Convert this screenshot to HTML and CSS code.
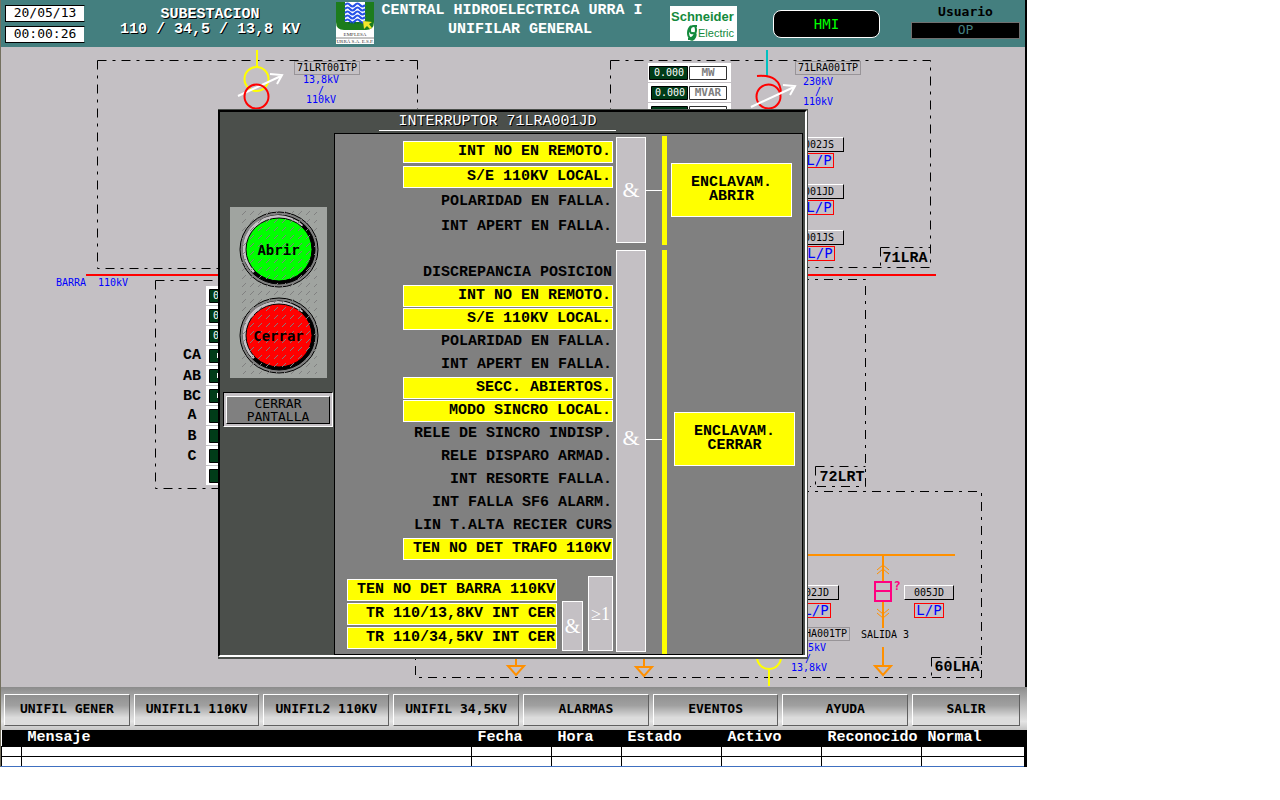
FILE: index.html
```html
<!DOCTYPE html>
<html lang="es">
<head>
<meta charset="utf-8">
<title>Subestacion 110 / 34,5 / 13,8 KV</title>
<link rel="stylesheet" href="styles.css">
</head>
<body>
<div class="app">
  <header class="topbar">
    <div class="clock"><time>20/05/13</time><time>00:00:26</time></div>
    <h1 class="station">SUBESTACION<br>110 / 34,5 / 13,8 KV</h1>
    <svg class="urra" width="38" height="42" viewBox="0 0 38 42" role="img" aria-label="Empresa Urra">
      <rect width="38" height="42" fill="#fff"/>
      <path d="M0 0H38V20Q38 28 30 28H8Q0 28 0 20Z" fill="#1c7c1c"/>
      <rect x="9" y="0" width="20" height="20" fill="#fff"/>
      <g fill="none" stroke="#2450e8" stroke-width="2">
        <path d="M9 3q2.500-3 5 0t5 0t5 0t5 0M9 7q2.500-3 5 0t5 0t5 0t5 0M9 11q2.500-3 5 0t5 0t5 0t5 0M9 15q2.500-3 5 0t5 0t5 0t5 0M9 19q2.500-3 5 0t5 0t5 0t5 0"/>
      </g>
      <path d="M12 21h16" stroke="#063" stroke-dasharray="2 1"/>
      <path d="M27 19l9 1-3 2 3 4-2 1-3-3-3 3z" fill="#f2e62a"/>
      <text x="19" y="34" text-anchor="middle" class="urra-name">EMPLESA</text>
      <path d="M0 36h38" stroke="#888"/>
      <text x="19" y="41" text-anchor="middle" class="urra-name">URRÁ S.A. E.S.P.</text>
    </svg>
    <h2 class="title">CENTRAL HIDROELECTRICA URRA I<br><span>UNIFILAR GENERAL</span></h2>
    <svg class="schneider" width="67" height="35" viewBox="0 0 67 35" role="img" aria-label="Schneider Electric">
      <rect width="67" height="35" fill="#fff"/>
      <text x="1" y="15" class="sch-name">Schneider</text>
      <g fill="none" stroke="#138a3c" stroke-width="2">
        <path d="M27 20h-3q-4 0-4 4t3 3q4 0 2 4t-5 2h-2M21 20q-3 3-3 7t3 6M25 20q2 4 0 8t-5 5"/>
      </g>
      <text x="28" y="31" class="sch-sub">Electric</text>
    </svg>
    <button class="hmi" type="button">HMI</button>
    <div class="user"><span>Usuario</span><output>OP</output></div>
  </header>

  <main class="diagram">
    <svg class="lines" width="1027" height="640" viewBox="0 47 1027 640" aria-label="Diagrama unifilar">
      <g class="zone">
        <path d="M97.500 60.500H417.500M97.500 60.500V268.500H417.500M417.500 60.500V268.500"/>
        <path d="M610.500 60.500H930.500V267.500H610.500M610.500 60.500V267.500M880.500 247.500H930.500M880.500 247.500V267.500"/>
        <path d="M155.500 280.500H220M155.500 280.500V488.500H220M800 279.500H865.500V486.500H810M815.500 466.500H865.500M815.500 466.500V486.500"/>
        <path d="M800 491.500H981.500V677.500H415.500V655M931.500 657.500H981.500M931.500 657.500V677.500"/>
      </g>
      <path d="M86 275H936" stroke="#f00" stroke-width="2"/>
      <g fill="none" stroke-width="2">
        <path d="M257 50V67" stroke="#ff0"/>
        <circle cx="256.500" cy="79" r="12" stroke="#ff0"/>
        <path d="M238 96L281 76M270 74L282 75L277 84" stroke="#fff"/>
        <circle cx="256.500" cy="96.500" r="12" stroke="#f00"/>
        <path d="M767 50V76" stroke="#00c0c0"/>
        <path d="M757 76Q781 74 781 94" stroke="#f00"/>
        <circle cx="768.500" cy="96.500" r="12" stroke="#f00"/>
        <path d="M751 107L794 87M783 85L795 86L790 95" stroke="#fff"/>
        <path d="M757 657a12 12 0 0 0 24 0M769 669V686" stroke="#ff0"/>
        <g stroke="#ff9000">
          <path d="M800 555H955M883 555V581M883 602V628M883 647V666M875 666H891L883 675Z"/>
          <path d="M516 655V666M508 666H524L516 675Z"/>
          <path d="M644 655V667M636 667H652L644 676Z"/>
          <path stroke-width="1" d="M877 570l6-5 6 5M877 574l6-5 6 5M877 609l6 5 6-5M877 613l6 5 6-5"/>
        </g>
        <path d="M875 582H891V601H875ZM875 591H891" stroke="#ff0080"/>
      </g>
      <g class="meters">
        <path d="M648 63h83v19h-83zM648 83h83v19h-83zM648 103h83v10h-83z" fill="#fff"/>
        <path d="M206 286h14v199h-14z" fill="#fff"/>
        <path d="M206 305.500h14m-14 20h14m-14 20h14m-14 20h14m-14 20h14m-14 20h14m-14 20h14m-14 20h14m-14 20h14" stroke="#c4c0c4"/>
        <path class="lcd" d="M649.500 66.500h38v13h-38zM651.500 86.500h36v13h-36zM651.500 106.500h36v13h-36z"/>
        <path class="unit" d="M689.500 66.500h37v13h-37zM689.500 86.500h37v13h-37zM689.500 106.500h37v13h-37z"/>
        <path class="lcd" d="M209.500 289.500h20v13h-20zM209.500 309.500h20v13h-20zM209.500 329.500h20v13h-20zM209.500 349.500h20v13h-20zM209.500 369.500h20v13h-20zM209.500 389.500h20v13h-20zM209.500 409.500h20v13h-20zM209.500 429.500h20v13h-20zM209.500 449.500h20v13h-20zM209.500 469.500h20v13h-20z"/>
        <path d="M217.500 353v5m0 15v5m0 15v5" stroke="#fff"/>
      </g>
      <g class="lcd-text">
        <text x="654" y="76">0.000</text><text x="655" y="96">0.000</text>
        <text x="213" y="299">0</text><text x="213" y="319">0</text><text x="213" y="339">0</text>
      </g>
      <g class="unit-text"><text x="708" y="76">MW</text><text x="708" y="96">MVAR</text></g>
      <g class="blue">
        <text x="321" y="83">13,8kV</text><text x="321" y="94">/</text><text x="321" y="103">110kV</text>
        <text x="818" y="85">230kV</text><text x="818" y="95">/</text><text x="818" y="105">110kV</text>
        <text x="71" y="286">BARRA</text><text x="113" y="286">110kV</text>
        <text x="808" y="651">34,5kV</text><text x="808" y="662">/</text><text x="809" y="671">13,8kV</text>
      </g>
      <g class="phase">
        <text x="192" y="359">CA</text><text x="192" y="380">AB</text><text x="192" y="400">BC</text>
        <text x="192" y="419">A</text><text x="192" y="440">B</text><text x="192" y="460">C</text>
        <text x="905" y="262">71LRA</text><text x="842" y="481">72LRT</text><text x="957" y="671">60LHA</text>
      </g>
      <text x="885" y="638" class="feeder">SALIDA 3</text>
      <text x="897" y="590" class="unknown">?</text>
    </svg>
    <span class="tag trafo-lrt">71LRT001TP</span>
    <span class="tag trafo-lra">71LRA001TP</span>
    <span class="tag trafo-lha">71LHA001TP</span>
    <button type="button" class="dev d1">002JS</button><button type="button" class="lp p1">L/P</button>
    <button type="button" class="dev d2">001JD</button><button type="button" class="lp p2">L/P</button>
    <button type="button" class="dev d3">001JS</button><button type="button" class="lp p3">L/P</button>
    <button type="button" class="dev d4">002JD</button><button type="button" class="lp p4">L/P</button>
    <button type="button" class="dev d5">005JD</button><button type="button" class="lp p5">L/P</button>

    <section class="dialog" role="dialog" aria-labelledby="dlg-title">
      <div class="frame">
        <h3 class="dialog-title" id="dlg-title">INTERRUPTOR 71LRA001JD</h3>
        <div class="dialog-body">
          <div class="side">
            <div class="plate">
              <button type="button" class="round open">
                <svg width="80" height="77" viewBox="0 0 80 77" aria-hidden="true">
                  <ellipse cx="40" cy="38.500" rx="39" ry="37.500" fill="#808080" stroke="#000"/>
                  <ellipse cx="40" cy="38.500" rx="36" ry="34.500" fill="#000" stroke="#000"/>
                  <path d="M14 62A35 33.500 0 0 1 64 14L60 20L18 58Z" fill="#c4c0c4"/>
                  <ellipse cx="40" cy="38.500" rx="33" ry="31.500" fill="#0f0" stroke="#000"/>
                </svg><span>Abrir</span></button>
              <button type="button" class="round close">
                <svg width="80" height="77" viewBox="0 0 80 77" aria-hidden="true">
                  <ellipse cx="40" cy="38.500" rx="39" ry="37.500" fill="#808080" stroke="#000"/>
                  <ellipse cx="40" cy="38.500" rx="36" ry="34.500" fill="#000" stroke="#000"/>
                  <path d="M14 62A35 33.500 0 0 1 64 14L60 20L18 58Z" fill="#c4c0c4"/>
                  <ellipse cx="40" cy="38.500" rx="33" ry="31.500" fill="#f00" stroke="#000"/>
                </svg><span>Cerrar</span></button>
              <svg class="hatch" width="97" height="171" aria-hidden="true">
                <defs><pattern id="dash" x="11" y="3" width="8" height="8" patternUnits="userSpaceOnUse"><path d="M1 4h1v-1h1v-1h1v-1h1v1h-1v1h-1v1h-1v1h-1z" fill="#808080"/></pattern></defs>
                <rect x="11" y="3" width="76" height="164" fill="url(#dash)"/>
              </svg>
            </div>
            <button type="button" class="exit"><span>CERRAR<br>PANTALLA</span></button>
          </div>
          <div class="logic">
            <div class="group trip">
              <ul class="conds">
                <li class="on">INT NO EN REMOTO.</li>
                <li class="on">S/E 110KV LOCAL.</li>
                <li>POLARIDAD EN FALLA.</li>
                <li>INT APERT EN FALLA.</li>
              </ul>
              <div class="gate">&amp;</div>
              <div class="wire"><hr></div>
              <div class="bus"></div>
              <div class="out"><p>ENCLAVAM.<br>ABRIR</p></div>
            </div>
            <div class="group shut">
              <div class="inputs">
                <ul class="conds">
                  <li>DISCREPANCIA POSICION</li>
                  <li class="on">INT NO EN REMOTO.</li>
                  <li class="on">S/E 110KV LOCAL.</li>
                  <li>POLARIDAD EN FALLA.</li>
                  <li>INT APERT EN FALLA.</li>
                  <li class="on">SECC. ABIERTOS.</li>
                  <li class="on">MODO SINCRO LOCAL.</li>
                  <li>RELE DE SINCRO INDISP.</li>
                  <li>RELE DISPARO ARMAD.</li>
                  <li>INT RESORTE FALLA.</li>
                  <li>INT FALLA SF6 ALARM.</li>
                  <li>LIN T.ALTA RECIER CURS</li>
                  <li class="on">TEN NO DET TRAFO 110KV</li>
                </ul>
                <div class="sub">
                  <ul class="conds">
                    <li class="on">TEN NO DET BARRA 110KV</li>
                    <li class="on">TR 110/13,8KV INT CER</li>
                    <li class="on">TR 110/34,5KV INT CER</li>
                  </ul>
                  <div class="gate and">&amp;</div>
                  <div class="gate or">≥1</div>
                </div>
              </div>
              <div class="gate">&amp;</div>
              <div class="wire"><hr></div>
              <div class="bus"></div>
              <div class="out"><p>ENCLAVAM.<br>CERRAR</p></div>
            </div>
          </div>
        </div>
      </div>
    </section>
  </main>

  <nav class="menu">
    <button type="button">UNIFIL GENER</button>
    <button type="button">UNIFIL1 110KV</button>
    <button type="button">UNIFIL2 110KV</button>
    <button type="button">UNIFIL 34,5KV</button>
    <button type="button">ALARMAS</button>
    <button type="button">EVENTOS</button>
    <button type="button">AYUDA</button>
    <button type="button">SALIR</button>
  </nav>

  <table class="alarms">
    <colgroup><col class="c-id"><col><col class="c-date"><col class="c-time"><col class="c-std"><col class="c-std"><col class="c-std"><col class="c-last"></colgroup>
    <thead><tr><th></th><th>Mensaje</th><th>Fecha</th><th>Hora</th><th>Estado</th><th>Activo</th><th>Reconocido</th><th>Normal</th></tr></thead>
    <tbody>
      <tr><td></td><td></td><td></td><td></td><td></td><td></td><td></td><td></td></tr>
      <tr><td></td><td></td><td></td><td></td><td></td><td></td><td></td><td></td></tr>
    </tbody>
  </table>
</div>
</body>
</html>
```
FILE: styles.css
```css
* { box-sizing: border-box; }

body {
  margin: 0;
  background: #fff;
  display: grid;
  grid-template-columns: 1027fr 253fr;
  font-family: "Liberation Mono", monospace;
  font-size: 15px;
  color: #000;
}

h1, h2, h3, p, ul { margin: 0; padding: 0; }
button { margin: 0; padding: 0; color: inherit; font: inherit; cursor: pointer; }

.app { border-left: 1px solid #74705f; min-width: 0; }

/* header */
.topbar {
  display: grid;
  grid-template-columns: 80fr 250fr 40fr 274fr 108fr 139fr 124fr;
  justify-items: center;
  align-items: start;
  height: 47px;
  padding: 0 5px 0 4px;
  background: #447f7f;
  border-right: 2px solid #000;
  font-weight: bold;
}
.clock { display: grid; gap: 4px; width: 100%; padding-top: 5px; }
.clock time {
  height: 17px;
  border: 1px solid #000;
  border-right-color: #447f7f;
  background: #fff;
  font: 13px/14px "DejaVu Sans Mono", monospace;
  text-align: center;
}
.station { padding-top: 7px; font-size: 15px; line-height: 15px; text-align: center; color: #fff; text-shadow: 1px 1px #000; white-space: nowrap; }
.urra { margin-top: 2px; }
.urra-name { font: 5px "Liberation Serif", serif; fill: #333; }
.title { padding-top: 1px; font-size: 15px; line-height: 19px; text-align: center; color: #fff; white-space: nowrap; }
.title span { padding-left: 16px; }
.schneider { margin-top: 6px; }
.sch-name { font: bold 13px "Liberation Sans", sans-serif; fill: #138a3c; }
.sch-sub { font: 11px "Liberation Sans", sans-serif; fill: #138a3c; }
.hmi {
  width: 107px;
  height: 28px;
  margin-top: 10px;
  border: 1px solid #fff;
  border-radius: 8px;
  background: #000;
  color: #0f0;
  font: 14px/24px "DejaVu Sans Mono", monospace;
}
.user { justify-self: end; display: grid; width: 109px; padding-top: 4px; text-align: center; font: bold 13px/16px "DejaVu Sans Mono", monospace; }
.user output { height: 17px; margin-top: 2px; border: 1px solid #707070; background: #000; color: #447f7f; font-weight: normal; line-height: 14px; }

/* single line diagram */
.diagram { position: relative; height: 640px; background: #c4c0c4; border-right: 2px solid #000; font: 10px "DejaVu Sans Mono", monospace; overflow: hidden; }
.lines { position: absolute; left: -1px; top: 0; }
.zone { fill: none; stroke: #000; stroke-dasharray: 9 6 3 6; }
.lcd { fill: #003c18; stroke: #000; }
.unit { fill: #fff; stroke: #303030; }
.lcd-text { fill: #fff; }
.unit-text { font-size: 11px; font-weight: bold; fill: #808080; text-anchor: middle; }
.blue { fill: #00f; text-anchor: middle; }
.phase { font: bold 15px "Liberation Mono", monospace; text-anchor: middle; }
.feeder { text-anchor: middle; }
.unknown { font-size: 12px; font-weight: bold; fill: #ff0080; text-anchor: middle; }

.tag, .dev, .lp { position: absolute; text-align: center; }
.tag { width: 66px; height: 14px; border: 1px solid #989498; line-height: 11px; }
.dev { width: 50px; height: 15px; border: 1px solid #000; border-top-color: #fff; border-left-color: #fff; background: #c4c0c4; line-height: 12px; }
.lp { width: 30px; height: 15px; border: 1px solid #f00; background: none; color: #00f; font-size: 14px; line-height: 11px; }
.trafo-lrt { left: 293px; top: 14px; }
.trafo-lra { left: 794px; top: 14px; }
.trafo-lha { left: 783px; top: 580px; }
.d1 { left: 793px; top: 90px; }
.p1 { left: 803px; top: 106px; }
.d2 { left: 793px; top: 137px; }
.p2 { left: 803px; top: 153px; }
.d3 { left: 793px; top: 183px; }
.p3 { left: 804px; top: 199px; }
.d4 { left: 788px; top: 538px; }
.p4 { left: 800px; top: 556px; }
.d5 { left: 903px; top: 538px; }
.p5 { left: 913px; top: 556px; }

/* breaker dialog */
.dialog {
  position: absolute;
  left: 217px;
  top: 62px;
  width: 590px;
  border: solid #4b4f4b;
  border-width: 1px 1px 2px 0;
  background: #4b4f4b;
  font: bold 15px "Liberation Mono", monospace;
}
.frame { border: 2px solid; border-color: #000 #fff #fff #000; padding-right: 2px; }
.dialog-title {
  width: 237px;
  height: 19px;
  margin: 0 0 2px 159px;
  border-bottom: 1px solid #fff;
  font-size: 15px;
  font-weight: normal;
  line-height: 19px;
  text-align: center;
  color: #fff;
  text-shadow: 1px 1px #000;
}
.dialog-body { display: grid; grid-template-columns: 114px 1fr; }
.side { display: grid; align-content: start; gap: 14px; padding: 74px 1px 0 3px; }
.plate { position: relative; display: grid; gap: 9px; justify-content: center; width: 97px; margin-left: 7px; padding: 4px 0; background: #a0a4a0; }
.round { display: grid; place-items: center; width: 80px; height: 77px; border: 0; background: none; font: bold 14px/14px "DejaVu Sans Mono", monospace; }
.round > * { grid-area: 1 / 1; }
.round span { z-index: 1; }
.hatch { position: absolute; left: 0; top: 0; pointer-events: none; }
.exit { height: 35px; padding: 2px; border: 1px solid; border-color: #000 #fff #fff #000; background: #c4c0c4; font: 13px/13px "DejaVu Sans Mono", monospace; }
.exit span { display: block; border: 1px solid; border-color: #fff #000 #000 #fff; background: #808080; }

.logic { display: grid; gap: 5px; padding-top: 2px; border: 1px solid #000; background: #808080; }
.group { display: grid; grid-template-columns: 281px 30px 16px 5px 1fr; }
.trip { height: 109px; }
.shut { height: 404px; }
.conds { display: grid; gap: 1px; width: 210px; list-style: none; }
.conds li { height: 22px; padding-right: 1px; line-height: 22px; text-align: right; white-space: nowrap; }
.conds .on { border: 1px solid #fff; background: #ff0; line-height: 20px; }
.trip .conds { gap: 3px; align-content: start; justify-self: end; margin-right: 3px; padding-top: 5px; }
.inputs { display: grid; justify-items: end; align-content: start; gap: 16px; padding: 12px 3px 0 0; }
.sub { display: flex; gap: 5px; align-items: flex-end; }
.sub .conds { gap: 2px; padding-bottom: 2px; }
.gate {
  display: flex;
  align-items: center;
  justify-content: center;
  border: 1px solid #fff;
  background: #c4c0c4;
  color: #fff;
  font: 22px/22px "Liberation Serif", serif;
}
.trip > .gate { margin: 1px 0 2px; }
.shut > .gate { margin-bottom: 2px; padding-bottom: 26px; }
.shut .and { width: 21px; height: 50px; font-size: 20px; }
.shut .or { width: 25px; height: 75px; font-size: 18px; }
.wire, .out { display: grid; align-items: center; }
.wire hr { width: 100%; margin: 0; border: 0; border-top: 1px solid #fff; }
.shut > .wire, .shut > .out { padding-bottom: 26px; }
.bus { background: #ff0; }
.out { padding: 0 0 2px 4px; }
.shut > .out { padding-left: 7px; }
.out p { width: 121px; padding: 12px 0; border: 1px solid #fff; background: #ff0; line-height: 14px; text-align: center; }

/* navigation */
.menu {
  display: grid;
  grid-template-columns: repeat(7, 126fr) 108fr;
  gap: 4px;
  padding: 7px 7px 4px 3px;
  background: linear-gradient(#8c8c8c, #a8a8a8 25%, #e4e4e4 80%, #c4c4c4);
}
.menu button {
  height: 32px;
  border: 1px solid;
  border-color: #fff #606060 #606060 #fff;
  background: linear-gradient(#909090, #a0a0a0 35%, #dcdcdc 75%, #dcdcdc);
  font: bold 13px/26px "DejaVu Sans Mono", monospace;
  padding-bottom: 2px;
  white-space: nowrap;
}

/* alarm list */
.alarms { width: 100%; table-layout: fixed; border-collapse: collapse; border-bottom: 1px solid #4070c0; border-right: 3px solid #000; }
.c-id { width: 20px; }
.c-date { width: 80px; }
.c-time { width: 70px; }
.c-std { width: 100px; }
.c-last { width: 104px; }
.alarms th { height: 16px; padding: 0 0 0 6px; background: #000; color: #fff; font: bold 15px/16px "Liberation Mono", monospace; text-align: left; }
.alarms td { height: 10px; padding: 0; border: 1px solid #000; }
.alarms tbody tr:last-child td { border-bottom: 1px solid #4070c0; }
```
